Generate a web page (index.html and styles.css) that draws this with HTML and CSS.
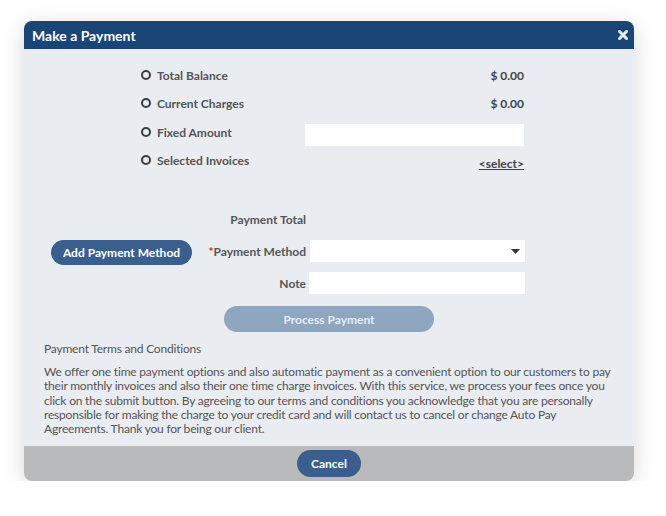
FILE: index.html
```html
<!DOCTYPE html>
<html>
<head>
<meta charset="utf-8">
<link rel="stylesheet" href="styles.css">
</head>
<body>
<div class="stage">
  <div class="dialog">
    <div class="header">
      <span class="title">Make a Payment</span>
      <svg class="close" width="10" height="10" viewBox="0 0 10 10"><path d="M1.5 1.5 L8.5 8.5 M8.5 1.5 L1.5 8.5" stroke="#e6ebf2" stroke-width="3" stroke-linecap="square"/></svg>
    </div>
    <div class="body">
      <div class="options">
        <div class="opt"><span class="radio"></span>Total Balance</div>
        <div class="val">$ 0.00</div>
        <div class="opt"><span class="radio"></span>Current Charges</div>
        <div class="val">$ 0.00</div>
        <div class="opt"><span class="radio"></span>Fixed Amount</div>
        <div class="val"><div class="input amount"></div></div>
        <div class="opt"><span class="radio"></span>Selected Invoices</div>
        <div class="val"><span class="link">&lt;select&gt;</span></div>
      </div>
      <div class="pay">
        <div class="lbl total">Payment Total</div>
        <div class="field total"></div>
        <div class="addcell"><span class="btn add">Add Payment Method</span></div>
        <div class="lbl"><span class="req">*</span>Payment Method</div>
        <div class="field"><div class="input select"><svg width="9" height="5" viewBox="0 0 9 5"><path d="M0 0 H9 L4.5 5 Z" fill="#333"/></svg></div></div>
        <div class="lbl note">Note</div>
        <div class="field"><div class="input noteinput"></div></div>
      </div>
      <div class="process-row"><span class="btn process">Process Payment</span></div>
      <div class="terms">
        <div class="terms-title">Payment Terms and Conditions</div>
        <p class="terms-text">We offer one time payment options and also automatic payment as a convenient option to our customers to pay their monthly invoices and also their one time charge invoices. With this service, we process your fees once you click on the submit button. By agreeing to our terms and conditions you acknowledge that you are personally responsible for making the charge to your credit card and will contact us to cancel or change Auto Pay Agreements. Thank you for being our client.</p>
      </div>
    </div>
    <div class="footer"><span class="btn cancel">Cancel</span></div>
  </div>
</div>
</body>
</html>
```
FILE: styles.css
```css
html, body {
  margin: 0;
  padding: 0;
  background: #ffffff;
}
body {
  font-family: Lato, "Noto Sans", sans-serif;
  font-size: 12px;
  color: #555;
}
.stage {
  padding: 21px 0 0 24px;
}
.dialog {
  width: 610px;
  border-radius: 8px;
  overflow: hidden;
  box-shadow: 0 4px 22px rgba(0, 0, 0, 0.16);
}
.header {
  height: 28px;
  background: #1a4677;
  display: flex;
  align-items: center;
  justify-content: space-between;
  padding: 0 6px 0 8px;
}
.title {
  color: #fff;
  font-weight: 700;
  font-size: 14px;
}
.close {
  display: block;
}
.body {
  background: #e9ecf1;
  padding: 12px 0 10px;
}
.options {
  display: grid;
  grid-template-columns: 166px 219px;
  grid-auto-rows: 28.5px;
  margin-left: 115px;
  align-items: center;
}
.opt {
  display: flex;
  align-items: center;
  font-weight: 700;
  color: #555;
}
.radio {
  width: 6px;
  height: 6px;
  border: 2px solid #3d3d3d;
  border-radius: 50%;
  margin: -1px 6px 0 2px;
}
.val {
  text-align: right;
  font-weight: 700;
  color: #444;
}
.input {
  background: #fff;
  height: 22px;
}
.amount {
  width: 219px;
  margin-top: 5px;
}
.link {
  text-decoration: underline;
  font-weight: 700;
  color: #444;
  position: relative;
  top: 3px;
}
.pay {
  display: grid;
  grid-template-columns: 141px 110px 215px;
  column-gap: 4px;
  grid-template-rows: 22px 22px 22px;
  row-gap: 10px;
  margin: 33px 0 0 27px;
  align-items: center;
}
.addcell {
  grid-column: 1;
}
.total.lbl {
  grid-column: 2;
}
.lbl {
  text-align: right;
  font-weight: 700;
  color: #555;
}
.req {
  color: #d22;
}
.note {
  grid-column: 2;
}
.noteinput {
  margin-left: -1px;
}
.select {
  display: flex;
  align-items: center;
  justify-content: flex-end;
  padding-right: 5px;
}
.select svg {
  display: block;
}
.btn {
  display: inline-flex;
  align-items: center;
  justify-content: center;
  border-radius: 14px;
  color: #fff;
  font-weight: 700;
  box-sizing: border-box;
}
.add {
  width: 141px;
  height: 25px;
  background: #3a5f8e;
  margin-top: 3px;
}
.process-row {
  display: flex;
  justify-content: center;
  margin-top: 12px;
}
.process {
  width: 210px;
  height: 26px;
  background: #8fa6c1;
  color: #e6ecf3;
}
.terms {
  padding: 0 20px;
  letter-spacing: -0.2px;
}
.terms-title {
  margin-top: 9px;
  line-height: 16px;
}
.terms-text {
  margin: 8px 0 0;
  line-height: 14.3px;
}
.footer {
  height: 35px;
  background: #b9babc;
  display: flex;
  align-items: center;
  justify-content: center;
}
.cancel {
  width: 64px;
  height: 27px;
  background: #3a5f8e;
}
```
